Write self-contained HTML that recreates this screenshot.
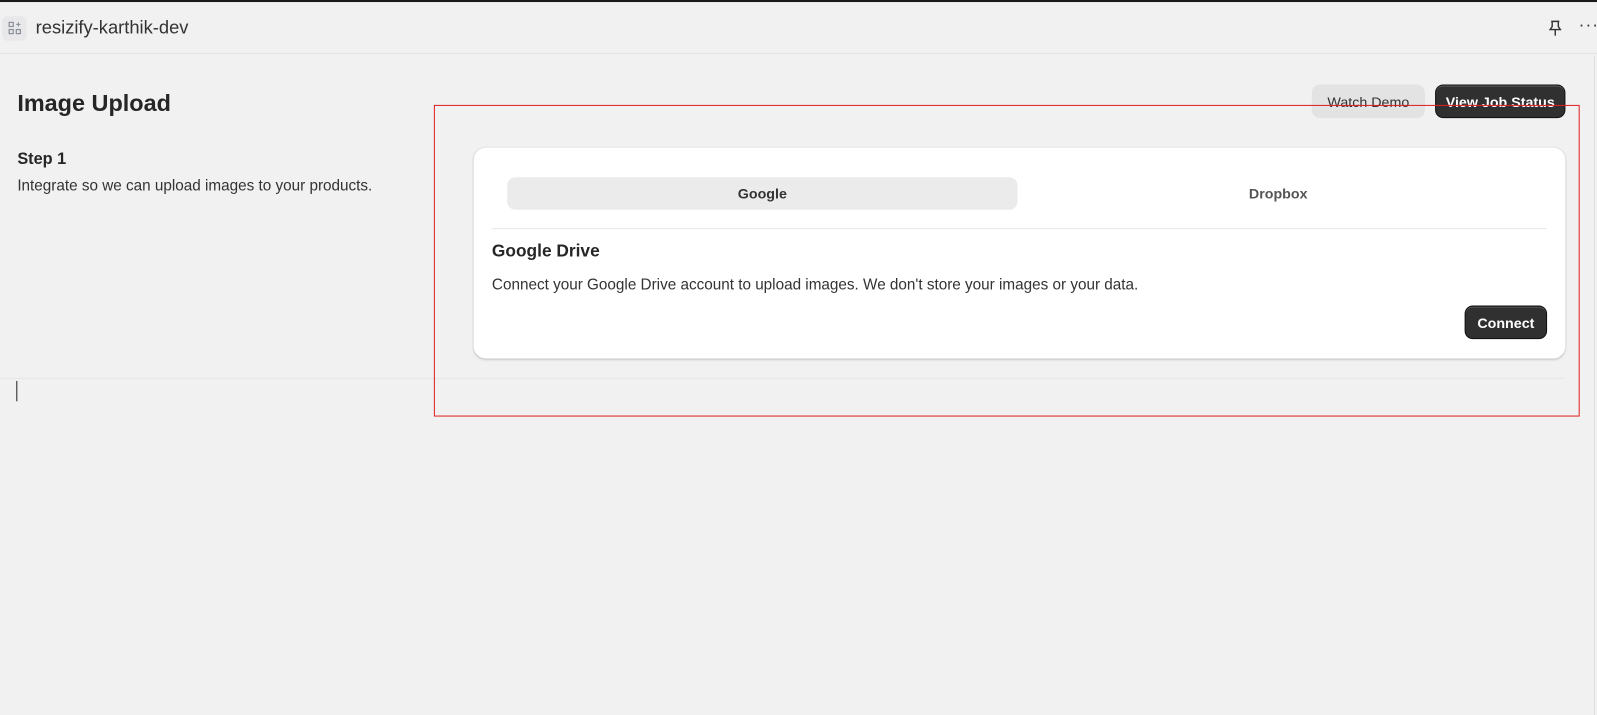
<!DOCTYPE html>
<html><head><meta charset="utf-8"><style>
*{box-sizing:border-box;margin:0;padding:0}
html,body{width:1597px;height:715px;overflow:hidden}
body{background:#f1f1f1;font-family:"Liberation Sans",sans-serif;color:#303030;position:relative}
#w{position:absolute;left:0;top:0;width:1568px;height:702px;transform:scale(1.0185);transform-origin:0 0}
.abs{position:absolute}
.btn{position:absolute;border-radius:8px;font-size:14px;font-weight:bold;display:flex;align-items:center;justify-content:center}
</style></head><body><div id="w">
<div class="abs" style="left:0;top:0;width:1568px;height:2px;background:#1a1a1a"></div>
<div class="abs" style="left:2px;top:16px;width:24px;height:24px;background:#e8e8ea;border-radius:5px"></div>
<svg class="abs" style="left:8px;top:21px" width="13" height="13" viewBox="0 0 13 13" fill="none" stroke="#8a8f98" stroke-width="1.2"><rect x="1" y="1" width="4" height="4"/><rect x="1" y="8" width="4" height="4"/><rect x="8" y="8" width="4" height="4"/><path d="M10 1v4M8 3h4"/></svg>
<div class="abs" style="left:35px;top:17px;font-size:18px;color:#333">resizify-karthik-dev</div>
<svg class="abs" style="left:1519px;top:19px" width="16" height="18" viewBox="0 0 16 18" fill="none" stroke="#333" stroke-width="1.4"><path d="M4 2h8M5 2v5l-2 3h10l-2-3V2M8 10v6"/></svg>
<div class="abs" style="left:1550px;top:15px;font-size:17px;color:#333;letter-spacing:1px">···</div>
<div class="abs" style="left:0;top:52px;width:1568px;height:1px;background:#e3e3e3"></div>
<div class="abs" style="left:1565px;top:55px;width:1px;height:660px;background:#ddd"></div>
<div class="abs" style="left:17px;top:88px;font-size:23px;font-weight:bold;color:#262626">Image Upload</div>
<div class="btn" style="left:1288px;top:83px;width:111px;height:33px;background:#e3e3e3;color:#333;font-weight:normal">Watch Demo</div>
<div class="btn" style="left:1409px;top:83px;width:128px;height:33px;background:#303030;color:#fff;border:1px solid #111;box-shadow:inset 0 1px 0 rgba(255,255,255,.2)">View Job Status</div>
<div class="abs" style="left:17px;top:148px;font-size:16px;font-weight:bold;color:#262626">Step 1</div>
<div class="abs" style="left:17px;top:174px;font-size:15px;color:#333">Integrate so we can upload images to your products.</div>
<div class="abs" style="left:465px;top:145px;width:1072px;height:207px;background:#fff;border-radius:12px;box-shadow:0 1px 2px rgba(0,0,0,.15),0 0 0 1px #e6e6e6"></div>
<div class="btn" style="left:498px;top:174px;width:501px;height:32px;background:#ebebeb;color:#333">Google</div>
<div class="btn" style="left:1010px;top:174px;width:490px;height:32px;color:#555">Dropbox</div>
<div class="abs" style="left:483px;top:224px;width:1035px;height:1px;background:#e6e6e6"></div>
<div class="abs" style="left:483px;top:237px;font-size:17px;font-weight:bold;color:#262626">Google Drive</div>
<div class="abs" style="left:483px;top:271px;font-size:15px;color:#333">Connect your Google Drive account to upload images. We don't store your images or your data.</div>
<div class="btn" style="left:1438px;top:300px;width:81px;height:33px;background:#303030;color:#fff;border:1px solid #111;box-shadow:inset 0 1px 0 rgba(255,255,255,.2)">Connect</div>
<div class="abs" style="left:0;top:371px;width:1536px;height:1px;background:#e6e6e6"></div>
<div class="abs" style="left:16px;top:374px;width:1px;height:20px;background:#222"></div>
<div class="abs" style="left:426px;top:103px;width:1125px;height:306px;border:1px solid #e02020"></div>
</div></body></html>
